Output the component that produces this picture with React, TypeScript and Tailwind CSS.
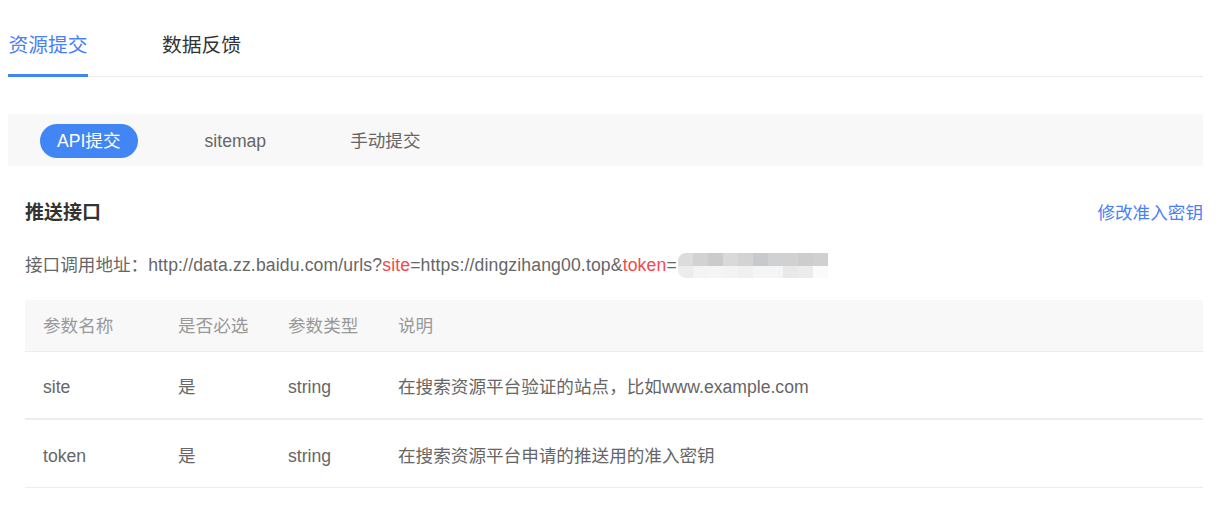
import React from "react";

const mosaicTop = ["#dcdcdc", "#d2d2d2", "#cbcbcb", "#d9d9d8", "#d3d3d3", "#c8c9cc", "#d0d1d3", "#d1d1d1", "#cdcdcd", "#d0d0d0"];
const mosaicBot = ["#ececec", "#f4f4f4", "#f5f5f5", "#f3f3f3", "#eff0f2", "#f5f5f5", "#f4f5f6", "#e9e9e9", "#ececec", "#fafbfc"];

function Mosaic() {
  return (
    <span className="inline-flex flex-col align-middle ml-[1px] rounded-l-[8px] overflow-hidden">
      <span className="flex">
        {mosaicTop.map((c, i) => (
          <span key={i} className="block w-[15px] h-[13px]" style={{ background: c }} />
        ))}
      </span>
      <span className="flex">
        {mosaicBot.map((c, i) => (
          <span key={i} className="block w-[15px] h-[12px]" style={{ background: c }} />
        ))}
      </span>
    </span>
  );
}

export default function App() {
  const font = "font-['Liberation_Sans','Noto_Sans_CJK_SC',sans-serif]";
  const rows = [
    { name: "site", req: "是", type: "string", desc: "在搜索资源平台验证的站点，比如www.example.com" },
    { name: "token", req: "是", type: "string", desc: "在搜索资源平台申请的推送用的准入密钥" },
  ];
  return (
    <div className={`w-[1227px] h-[507px] bg-white ${font} pl-[8px] pr-[24px]`}>
      {/* top tabs */}
      <div className="flex border-b border-[#ececec] h-[77px] items-end">
        <div className="relative h-full flex items-center pt-[16px] text-[19.8px] text-[#4a7ff7] w-[80px] justify-center">
          资源提交
          <div className="absolute left-0 right-0 bottom-[-1px] h-[3px] bg-[#4285f4]" />
        </div>
        <div className="h-full flex items-center pt-[16px] text-[19.8px] text-[#333] ml-[74px]">数据反馈</div>
      </div>

      {/* subtabs */}
      <div className="mt-[37px] h-[52px] bg-[#f8f8f8] flex items-center pl-[32px] gap-[50px] text-[17.6px]">
        <div className="h-[34px] mt-[2px] rounded-full bg-[#4285f4] text-white px-[17px] flex items-center">API提交</div>
        <div className="px-[17px] pt-[2px] text-[#666]">sitemap</div>
        <div className="px-[17px] pt-[2px] text-[#666]">手动提交</div>
      </div>

      <div className="pl-[17px]">
        <div className="flex justify-between items-center mt-[34px] h-[26px]">
          <div className="text-[19px] font-bold text-[#333]">推送接口</div>
          <div className="text-[17.6px] text-[#4a7ff7]">修改准入密钥</div>
        </div>
        <div className="mt-[26px] h-[26px] flex items-center text-[17.6px] text-[#666] whitespace-nowrap">
          <span>接口调用地址：</span>
          <span className="tracking-[0.14px]">http://data.zz.baidu.com/urls?</span>
          <span className="text-[#f5484b] tracking-[0.14px]">site</span>
          <span className="tracking-[0.14px]">=https://dingzihang00.top&amp;</span>
          <span className="text-[#f5484b] tracking-[0.14px]">token</span>
          <span>=</span>
          <Mosaic />
        </div>

        {/* table */}
        <div className="mt-[22px] text-[17.6px]">
          <div className="grid grid-cols-[135px_110px_110px_1fr] h-[52px] items-center bg-[#f8f8f8] border-b border-[#ececec] text-[#999] pt-[2px]">
            <div className="pl-[18px]">参数名称</div>
            <div className="pl-[18px]">是否必选</div>
            <div className="pl-[18px]">参数类型</div>
            <div className="pl-[18px]">说明</div>
          </div>
          {rows.map((r, i) => (
            <div
              key={r.name}
              className={`grid grid-cols-[135px_110px_110px_1fr] h-[68px] items-center text-[#666] pt-[5px] ${i === 0 ? "border-b-2 border-[#ededed]" : "border-b border-[#ededed]"}`}
            >
              <div className="pl-[18px]">{r.name}</div>
              <div className="pl-[18px]">{r.req}</div>
              <div className="pl-[18px]">{r.type}</div>
              <div className="pl-[18px]">{r.desc}</div>
            </div>
          ))}
        </div>
      </div>
    </div>
  );
}
